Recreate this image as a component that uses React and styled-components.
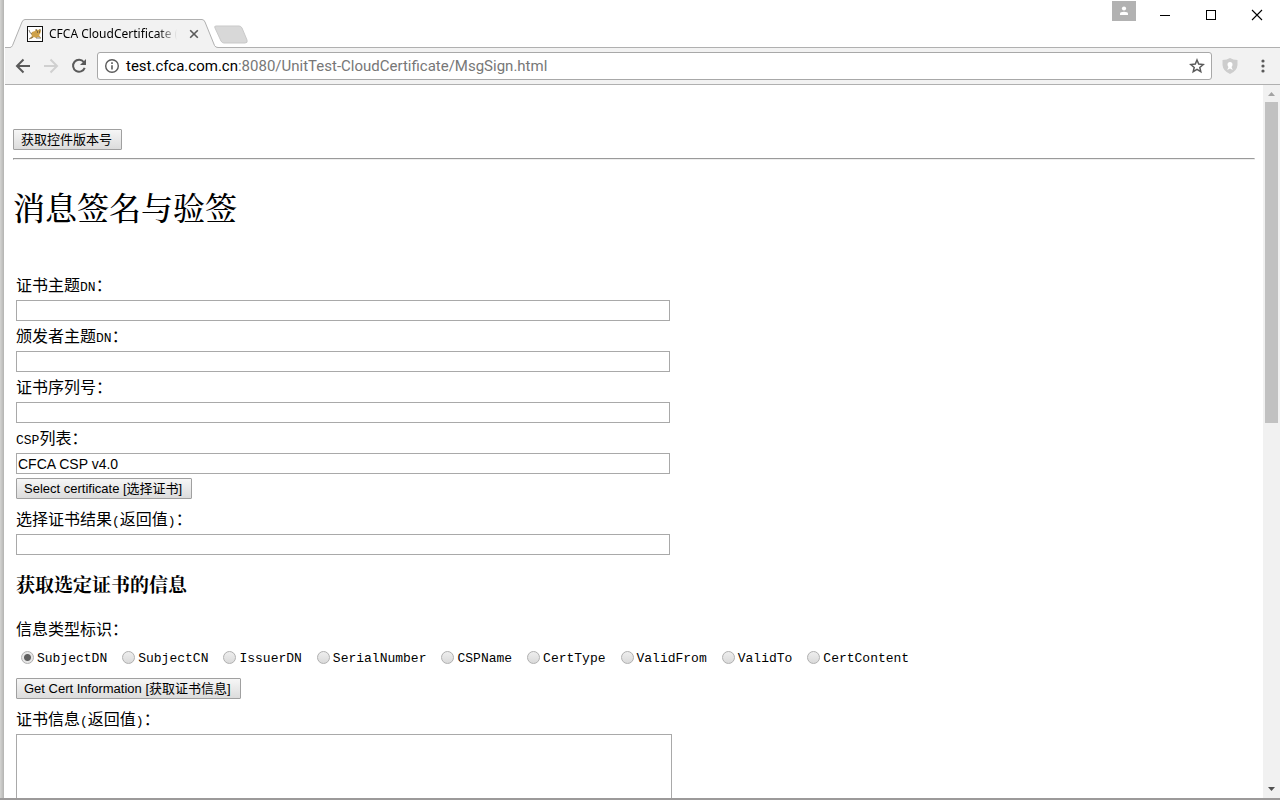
import { useState } from "react";
import styled, { createGlobalStyle } from "styled-components";

const GlobalStyle = createGlobalStyle`
  * {
    box-sizing: border-box;
  }

  body {
    margin: 0;
    overflow: hidden;
    color: #000;
  }
`;

const infoTypes = [
  "SubjectDN",
  "SubjectCN",
  "IssuerDN",
  "SerialNumber",
  "CSPName",
  "CertType",
  "ValidFrom",
  "ValidTo",
  "CertContent",
];

function TabStrip() {
  return (
    <TabStripStyled>
      <Tab>
        <TabShape viewBox="0 0 208 29" width="208" height="29">
          <path d="M0 28.5 Q1.5 28.5 2.5 26.5 L12 3 Q13 .5 15 .5 H192 Q194 .5 195 3 L204.5 26.5 Q205.5 28.5 208 28.5 V29 H0 Z" fill="#f2f2f2" />
          <path d="M0 28.5 Q1.5 28.5 2.5 26.5 L12 3 Q13 .5 15 .5 H192 Q194 .5 195 3 L204.5 26.5 Q205.5 28.5 208 28.5" fill="none" stroke="#b0b0b0" />
        </TabShape>
        <TabContent>
          <svg width="16" height="16" viewBox="0 0 16 16">
            <rect x=".5" y=".5" width="15" height="15" fill="#fff" stroke="#111" />
            <path d="M5 6 L8 5 L9 3 L11 4 L13 3 L14 5 L13 8 L12 9 L14 12 L11 11 L9 12 L7 11 L4 13 L3 12 L5 10 L4 8 Z" fill="#cfa24a" />
            <path d="M2 4 Q3 8 5 8 M2 13 L6 11 M9 12 H14 M9 3 L9.5 5 M13 3 V5" fill="none" stroke="#6b6558" strokeWidth=".8" />
            <path d="M10 6 H11 M12 6 H13" stroke="#333" />
          </svg>
          <TabTitle>CFCA CloudCertificate (</TabTitle>
          <IconButton aria-label="关闭标签页">
            <svg width="10" height="10" viewBox="0 0 10 10">
              <path d="M1.200 1.200 L8.800 8.800 M8.800 1.200 L1.200 8.800" stroke="#5a5a5a" strokeWidth="1.600" />
            </svg>
          </IconButton>
        </TabContent>
      </Tab>
      <IconButton aria-label="新标签页">
        <svg width="36" height="19" viewBox="0 0 36 19">
          <path d="M3 1 H26 Q28 1 29 3 L34 15 Q35 18 32 18 H11 Q9 18 8 16 L2 3 Q1 1 3 1 Z" fill="#d8d8d8" stroke="#c9c9c9" />
        </svg>
      </IconButton>
      <WindowControls>
        <UserButton aria-label="用户">
          <svg width="10" height="10" viewBox="0 0 10 10">
            <circle cx="5" cy="2.5" r="2.1" fill="#fff" />
            <path d="M1 9 V7.5 Q1 5.8 5 5.8 Q9 5.8 9 7.5 V9 Z" fill="#fff" />
          </svg>
        </UserButton>
        <ControlButton aria-label="最小化">
          <svg width="12" height="12" viewBox="0 0 12 12">
            <path d="M1 6.5 H11" stroke="#000" />
          </svg>
        </ControlButton>
        <ControlButton aria-label="最大化">
          <svg width="12" height="12" viewBox="0 0 12 12">
            <rect x="1.5" y="1.5" width="9" height="9" fill="none" stroke="#000" />
          </svg>
        </ControlButton>
        <ControlButton aria-label="关闭">
          <svg width="12" height="12" viewBox="0 0 12 12">
            <path d="M1 1 L11 11 M11 1 L1 11" stroke="#000" strokeWidth="1.1" />
          </svg>
        </ControlButton>
      </WindowControls>
    </TabStripStyled>
  );
}

function Toolbar() {
  return (
    <ToolbarStyled>
      <NavButtons>
        <IconButton aria-label="后退">
          <svg width="16" height="16" viewBox="0 0 16 16">
            <path d="M15 8 H2.5 M8.5 1.500 L2 8 L8.500 14.500" fill="none" stroke="#5a5a5a" strokeWidth="2" />
          </svg>
        </IconButton>
        <IconButton aria-label="前进">
          <svg width="16" height="16" viewBox="0 0 16 16">
            <path d="M1 8 H13.5 M7.5 1.5 L14 8 L7.5 14.5" fill="none" stroke="#d0d0d0" strokeWidth="2" />
          </svg>
        </IconButton>
        <IconButton aria-label="刷新">
          <svg width="16" height="16" viewBox="0 0 16 16">
            <path d="M12.8 4 A6 6 0 1 0 13.7 9.8" fill="none" stroke="#5a5a5a" strokeWidth="2" />
            <path d="M15 1 V7 H9 Z" fill="#5a5a5a" />
          </svg>
        </IconButton>
      </NavButtons>
      <AddressBar>
        <svg width="16" height="16" viewBox="0 0 16 16">
          <circle cx="8" cy="8" r="6.3" fill="none" stroke="#5a5a5a" strokeWidth="1.4" />
          <path d="M8 7.2 V11.5 M8 4.3 V6" stroke="#5a5a5a" strokeWidth="1.6" />
        </svg>
        <Url>
          <b>test.cfca.com.cn</b>:8080/UnitTest-CloudCertificate/MsgSign.html
        </Url>
        <IconButton aria-label="收藏">
          <svg width="16" height="16" viewBox="0 0 16 16">
            <path d="M8 2 L9.7 6.1 L14.2 6.5 L10.8 9.4 L11.8 13.7 L8 11.4 L4.2 13.7 L5.2 9.4 L1.8 6.5 L6.3 6.1 Z" fill="none" stroke="#5a5a5a" strokeWidth="1.5" />
          </svg>
        </IconButton>
      </AddressBar>
      <IconButton aria-label="扩展程序">
        <svg width="16" height="16" viewBox="0 0 16 16">
          <path d="M8 0 Q11 2 15.5 2 V7 Q15 13 8 16 Q1 13 .5 7 V2 Q5 2 8 0 Z" fill="#cdcdcd" />
          <path d="M8 4 Q10.5 4 10.5 6.5 Q10.5 8 9.5 9 L10.8 12 L8 10.5 L5.2 12 L6.5 9 Q5.5 8 5.5 6.5 Q5.5 4 8 4 Z" fill="#fff" />
        </svg>
      </IconButton>
      <IconButton aria-label="菜单">
        <svg width="16" height="16" viewBox="0 0 16 16">
          <g fill="#5a5a5a">
            <circle cx="8" cy="3" r="1.6" />
            <circle cx="8" cy="8" r="1.6" />
            <circle cx="8" cy="13" r="1.6" />
          </g>
        </svg>
      </IconButton>
    </ToolbarStyled>
  );
}

function TextField({ id, label, value = "", tall }) {
  return (
    <>
      <FieldLabel htmlFor={id} $tall={tall}>
        {label}
      </FieldLabel>
      <TextInput id={id} type="text" defaultValue={value} />
    </>
  );
}

function SignForm() {
  const [type, setType] = useState("SubjectDN");

  return (
    <FormStyled onSubmit={(e) => e.preventDefault()}>
      <TextField id="subjectDN" label={<>证书主题<Latin>DN</Latin>：</>} />
      <TextField id="issuerDN" label={<>颁发者主题<Latin>DN</Latin>：</>} />
      <TextField id="serial" label="证书序列号：" />
      <TextField id="csp" label={<><Latin>CSP</Latin>列表：</>} value="CFCA CSP v4.0" />
      <FormButton type="button">Select certificate [选择证书]</FormButton>
      <TextField id="selectResult" tall label={<>选择证书结果<Latin>(</Latin>返回值<Latin>)</Latin>：</>} />
      <SubTitle>获取选定证书的信息</SubTitle>
      <TypeGroup>
        <legend>信息类型标识：</legend>
        {infoTypes.map((name) => (
          <TypeOption key={name}>
            <Radio name="infoType" checked={type === name} onChange={() => setType(name)} />
            <Latin>{name}</Latin>
          </TypeOption>
        ))}
      </TypeGroup>
      <FormButton type="button">Get Cert Information [获取证书信息]</FormButton>
      <FieldLabel htmlFor="certInfo" $tall>
        证书信息<Latin>(</Latin>返回值<Latin>)</Latin>：
      </FieldLabel>
      <TextArea id="certInfo" />
    </FormStyled>
  );
}

export default function App() {
  return (
    <WindowStyled>
      <GlobalStyle />
      <TabStrip />
      <Toolbar />
      <Viewport>
        <Page>
          <FormButton type="button">获取控件版本号</FormButton>
          <Divider />
          <Title>消息签名与验签</Title>
          <SignForm />
        </Page>
        <ScrollTrack>
          <Arrow $color="#a3a3a3" viewBox="0 0 17 17">
            <path d="M5 11 L8.5 7 L12 11 Z" />
          </Arrow>
          <ScrollThumb />
          <Arrow $color="#505050" viewBox="0 0 17 17">
            <path d="M5 6 L8.5 10 L12 6 Z" />
          </Arrow>
        </ScrollTrack>
      </Viewport>
    </WindowStyled>
  );
}

const WindowStyled = styled.div`
  height: 100vh;
  display: flex;
  flex-direction: column;
  padding-left: 5px;
  border-bottom: 2px solid #9c9a9a;
  background: linear-gradient(to right, #d4d4d2, #b4b4b2 4px, #fff 4px);
  overflow: hidden;
`;

const IconButton = styled.button`
  display: flex;
  flex: none;
  padding: 0;
  border: 0;
  background: none;
`;

const TabStripStyled = styled.div`
  flex: none;
  display: flex;
  align-items: flex-end;
  height: 48px;
  border-bottom: 1px solid #b0b0b0;
  padding-left: 5px;

  > ${IconButton} {
    margin: 0 0 3px -5px;
  }
`;

const Tab = styled.div`
  display: grid;
  flex: none;
  margin-bottom: -1px;

  > * {
    grid-area: 1 / 1;
  }
`;

const TabShape = styled.svg`
  display: block;
`;

const TabContent = styled.div`
  display: flex;
  align-items: center;
  padding: 0 19px 0 17px;
`;

const TabTitle = styled.span`
  flex: 1;
  width: 0;
  margin: 0 12px 0 6px;
  overflow: hidden;
  white-space: nowrap;
  font: 12px/16px "Noto Sans", sans-serif;
  mask-image: linear-gradient(to right, #000 85%, transparent);
`;

const WindowControls = styled.div`
  display: flex;
  align-self: flex-start;
  margin-left: auto;
`;

const UserButton = styled(IconButton)`
  align-items: center;
  justify-content: center;
  width: 24px;
  height: 20px;
  margin: 1px 6px 0 0;
  background: #b2b2b2;
`;

const ControlButton = styled(IconButton)`
  align-items: center;
  justify-content: center;
  width: 46px;
  height: 30px;
`;

const ToolbarStyled = styled.div`
  flex: none;
  display: flex;
  align-items: center;
  gap: 17px;
  height: 37px;
  padding: 0 9px 0 10px;
  border-bottom: 1px solid #b0b0b0;
  background: #f2f2f2;
`;

const NavButtons = styled.div`
  display: flex;
  gap: 12px;
  margin-right: -7px;
`;

const AddressBar = styled.div`
  flex: 1;
  display: flex;
  align-items: center;
  gap: 6px;
  height: 28px;
  margin-right: -7px;
  padding: 0 6px;
  border: 1px solid #a8a8a8;
  border-radius: 3px;
  background: #fff;
`;

const Url = styled.span`
  flex: 1;
  color: #777;
  font: 15px/20px Roboto, sans-serif;

  b {
    color: #000;
    font-weight: 400;
  }
`;

const Viewport = styled.div`
  flex: 1;
  min-height: 0;
  display: flex;
`;

const Page = styled.main`
  flex: 1;
  min-width: 0;
  padding: 44px 8px 0;
  overflow: hidden;
`;

const FormButton = styled.button`
  display: block;
  height: 21px;
  padding: 0 9px 0 7px;
  border: 1px solid #a0a0a0;
  border-radius: 1px;
  background: linear-gradient(#f6f6f6, #dcdcdc);
  color: #000;
  font: 13px/19px "Liberation Sans", "Noto Sans CJK SC", sans-serif;
  white-space: nowrap;
`;

const Divider = styled.hr`
  margin: 8px 0;
  border: 1px inset #eee;
`;

const Title = styled.h1`
  margin: 26px 0 44px;
  font: 500 32px/40px "Noto Serif CJK SC", "Noto Sans CJK SC", serif;
`;

const FormStyled = styled.form`
  padding-left: 3px;
  font: 16px/30px "Noto Sans CJK SC", sans-serif;
`;

const Latin = styled.span`
  font-family: "Liberation Mono", monospace;
  font-size: 13px;
`;

const FieldLabel = styled.label`
  display: block;
  height: ${(p) => (p.$tall ? 35 : 30)}px;
  padding-top: ${(p) => (p.$tall ? 5 : 0)}px;
  line-height: 28px;
`;

const TextInput = styled.input`
  display: block;
  width: 654px;
  max-width: 100%;
  height: 21px;
  padding: 0 1px;
  border: 1px solid #a9a9a9;
  font: 14px/19px "Liberation Sans", sans-serif;

  & + ${FormButton} {
    margin-top: 4px;
  }
`;

const SubTitle = styled.h3`
  margin: 14px 0 14px;
  font: 700 19px/30px "Noto Serif CJK SC", "Noto Sans CJK SC", serif;
`;

const TypeGroup = styled.fieldset`
  display: flex;
  gap: 10px;
  margin: 0 0 3px;
  padding: 0;
  border: 0;

  legend {
    padding: 0;
  }
`;

const TypeOption = styled.label`
  display: flex;
  align-items: center;
  gap: 3px;
  padding-left: 5px;
  line-height: 32px;
`;

const Radio = styled.input.attrs({ type: "radio" })`
  appearance: none;
  width: 13px;
  height: 13px;
  margin: 0 0 4px;
  border: 1px solid #b0b0b0;
  border-radius: 50%;
  background: ${(p) =>
    p.checked ? "radial-gradient(circle, #606060 3px, #e6e6e6 4px)" : "linear-gradient(#eee, #dadada)"};
`;

const TextArea = styled.textarea`
  display: block;
  width: 656px;
  max-width: 100%;
  height: 120px;
  border: 1px solid #a9a9a9;
  resize: none;
`;

const ScrollTrack = styled.div`
  flex: none;
  display: flex;
  flex-direction: column;
  width: 17px;
  background: #f1f1f1;
`;

const ScrollThumb = styled.div`
  height: 45%;
  margin: 0 2px auto;
  background: #c1c1c1;
`;

const Arrow = styled.svg`
  flex: none;
  width: 17px;
  height: 17px;
  fill: ${(p) => p.$color};
`;
